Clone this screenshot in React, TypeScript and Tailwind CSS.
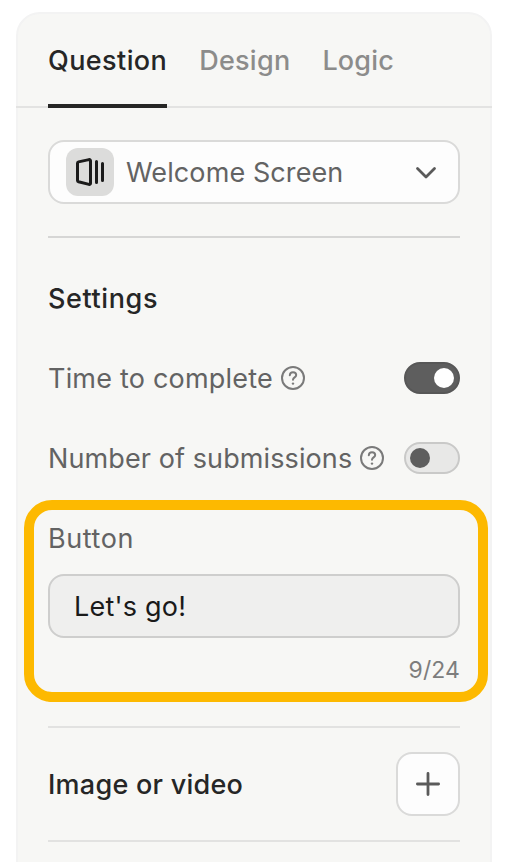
import { FC, ReactNode } from 'react';

const tabs = [
  { label: 'Question', className: 'border-[#262625] tracking-[0.41px] text-[#262626]' },
  { label: 'Design', className: 'border-transparent tracking-[0.25px] text-[#8c8c8b]' },
  { label: 'Logic', className: 'border-transparent tracking-[0.2px] text-[#8c8c8b]' },
];

const HelpIcon: FC = () => (
  <svg className="w-6 h-6 shrink-0" viewBox="0 0 24 24" fill="none" stroke="#7a7a7a" strokeWidth="2" strokeLinecap="round">
    <circle cx="12" cy="12" r="11" />
    <path d="M8.8 9.2C8.9 7.3 10.2 6.2 12 6.2s3.2 1.1 3.2 2.8c0 2.4-3.1 2.4-3.2 4.8" />
    <circle cx="12" cy="17.6" r="1.2" fill="#7a7a7a" stroke="none" />
  </svg>
);

interface ToggleProps {
  checked?: boolean;
}

const Toggle: FC<ToggleProps> = ({ checked = false }) => (
  <button
    role="switch"
    aria-checked={checked}
    className={
      checked
        ? 'flex w-14 h-8 items-center justify-end rounded-full border-2 border-[#575757] bg-[#5e5e5e] px-1'
        : 'flex w-14 h-8 items-center justify-start rounded-full border-2 border-[#c9c9c8] bg-[#e8e8e7] px-1'
    }
  >
    <span className={checked ? 'w-5 h-5 rounded-full bg-white' : 'w-5 h-5 rounded-full bg-[#5e5e5e]'} />
  </button>
);

interface SettingRowProps {
  children: ReactNode;
  checked?: boolean;
}

const SettingRow: FC<SettingRowProps> = ({ children, checked }) => (
  <div className="flex h-8 items-center justify-between text-[#636363]">
    <div className="flex items-center gap-2 whitespace-nowrap">
      {children}
      <HelpIcon />
    </div>
    <Toggle checked={checked} />
  </div>
);

const App: FC = () => {
  return (
    <div className="h-[862px] overflow-hidden bg-white px-4 pt-3 font-['Inter',sans-serif] text-[27px] leading-8">
      <div className="h-[880px] rounded-t-[24px] border-2 border-[#f3f3f3] bg-[#f7f7f5]">
        <nav className="-mx-0.5 flex h-[94px] gap-8 border-b-2 border-[#e3e3e2] px-8 font-medium">
          {tabs.map((tab) => (
            <button key={tab.label} className={`-mb-0.5 border-b-4 pb-[29px] pt-[31px] ${tab.className}`}>
              {tab.label}
            </button>
          ))}
        </nav>

        <div className="px-[30px] pt-8">
          <button className="flex h-16 w-full items-center rounded-2xl border-2 border-[#dadad9] bg-[#fdfdfd] pl-4 pr-5 text-[#636363]">
            <span className="mr-3 flex h-12 w-12 items-center justify-center rounded-xl bg-[#dcdcdb]">
              <svg className="h-8 w-8" viewBox="0 0 32 32" fill="none" stroke="#1a1a1a" strokeWidth="3" strokeLinecap="round" strokeLinejoin="round">
                <path d="M3.5 7.2Q3.5 6.2 4.5 5.9L15 3.6Q16.5 3.4 16.5 4.8V27.2Q16.5 28.6 15 28.4L4.5 25.7Q3.5 25.4 3.5 24.4Z" />
                <path d="M22.5 5.5v21M28.5 7.5v17" />
              </svg>
            </span>
            <span className="pt-0.5 tracking-[0.1px]">Welcome Screen</span>
            <svg className="ml-auto h-6 w-6" viewBox="0 0 24 24" fill="none" stroke="#5a5a5a" strokeWidth="2.8" strokeLinecap="round" strokeLinejoin="round">
              <path d="m3.5 8.5 8.5 8.5 8.5-8.5" />
            </svg>
          </button>

          <hr className="mt-8 border-t-2 border-[#d6d6d5]" />

          <h2 className="mt-[45px] font-medium tracking-[0.6px] text-[#262626]">Settings</h2>
          <div className="mt-[47px] flex flex-col gap-12">
            <SettingRow checked>
              <span className="pt-0.5 tracking-[0.2px]">Time to complete</span>
            </SettingRow>
            <SettingRow>
              <span className="pt-0.5 tracking-[0.1px]">Number of submissions</span>
            </SettingRow>
          </div>

          {/* Highlighted field */}
          <div className="-ml-6 -mr-7 mt-[26px] h-[202px] rounded-[28px] border-[10px] border-[#fdb900] pl-3.5 pr-[18px] pt-[13px]">
            <label htmlFor="button-text" className="block tracking-[0.6px] text-[#636363]">
              Button
            </label>
            <input
              id="button-text"
              defaultValue="Let's go!"
              className="mt-[19px] block h-16 w-full rounded-2xl border-2 border-[#cececd] bg-[#efefee] px-6 tracking-[0.2px] text-[#1a1a1a]"
            />
            <p className="mt-4 text-right text-[23px] leading-8 tracking-[0.1px] text-[#7d7d7d]">9/24</p>
          </div>

          <hr className="mt-6 border-t-2 border-[#e2e2e1]" />
          <div className="my-6 flex items-center justify-between">
            <h2 className="pt-0.5 font-medium tracking-[0.25px] text-[#262626]">Image or video</h2>
            <button className="flex h-16 w-16 items-center justify-center rounded-2xl border-2 border-[#dadad9] bg-[#fdfdfd]">
              <svg className="h-6 w-6" viewBox="0 0 24 24" fill="none" stroke="#5a5a5a" strokeWidth="2.8" strokeLinecap="round">
                <path d="M12 1.4v21.2M1.4 12h21.2" />
              </svg>
            </button>
          </div>
          <hr className="border-t-2 border-[#e2e2e1]" />
        </div>
      </div>
    </div>
  );
};

export default App;
